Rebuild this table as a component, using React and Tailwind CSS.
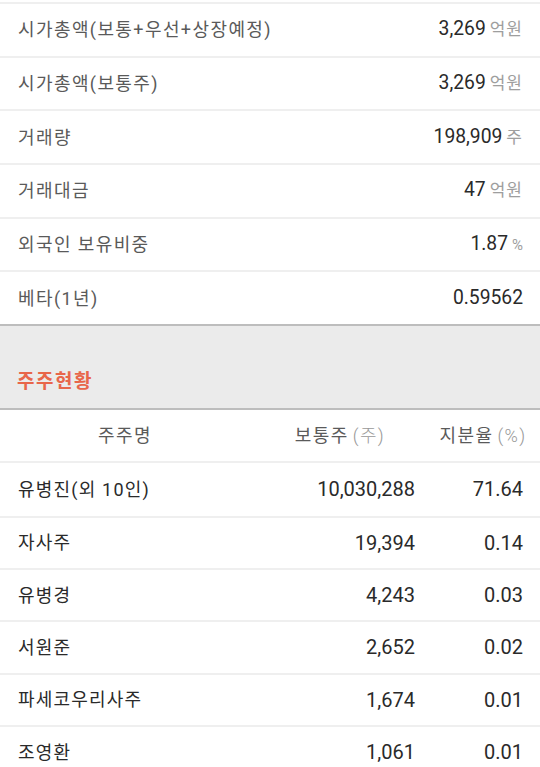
import React from "react";

const font = { fontFamily: "Roboto, 'Noto Sans CJK KR', sans-serif" };

const info = [
  ["시가총액(보통+우선+상장예정)", "3,269", "억원"],
  ["시가총액(보통주)", "3,269", "억원"],
  ["거래량", "198,909", "주"],
  ["거래대금", "47", "억원"],
  ["외국인 보유비중", "1.87", "%"],
  ["베타(1년)", "0.59562", ""],
];

const holders = [
  ["유병진(외 10인)", "10,030,288", "71.64"],
  ["자사주", "19,394", "0.14"],
  ["유병경", "4,243", "0.03"],
  ["서원준", "2,652", "0.02"],
  ["파세코우리사주", "1,674", "0.01"],
  ["조영환", "1,061", "0.01"],
];

export default function App() {
  return (
    <div className="w-[540px] h-[767px] overflow-hidden bg-white" style={font}>
      <div className="h-[2px]" />
      {info.map(([l, v, u], i) => (
        <div
          key={i}
          className="flex items-center justify-between pl-[18px] pr-[17px] h-[53.7px] border-t-2 border-[#efefef]"
        >
          <span className="text-[18px] tracking-[1.4px] text-[#5a5a5a]">{l}</span>
          <span className="flex items-baseline">
            <span className="text-[19.3px] font-normal text-[#2a2a2a]">{v}</span>
            {u && (
              <span className={`ml-[4px] ${u === "%" ? "text-[15px]" : "text-[17px] tracking-[1px]"} text-[#9e9e9e]`}>
                {u}
              </span>
            )}
          </span>
        </div>
      ))}
      <div className="h-[86px] bg-[#ebebeb] border-t-2 border-b-2 border-[#bdbdbd] flex items-end pb-[12px] px-[17px]">
        <span className="text-[19px] font-bold tracking-[1.5px] text-[#e8664a]">주주현황</span>
      </div>
      <div className="flex items-center h-[53px] border-b-2 border-[#efefef] text-[18px] text-[#5a5a5a]">
        <div className="w-[250px] text-center tracking-[1.5px]">주주명</div>
        <div className="w-[180px] text-center tracking-[1.4px]">
          보통주<span className="ml-[4px] text-[18px] font-light text-[#999999]">(주)</span>
        </div>
        <div className="w-[110px] text-center pr-[4px] tracking-[1.4px]">
          지분율<span className="ml-[4px] text-[18px] font-light text-[#999999]">(%)</span>
        </div>
      </div>
      {holders.map(([n, s, p], i) => (
        <div
          key={i}
          className={`flex items-center h-[52.4px] ${i > 0 ? "border-t-2 border-[#efefef]" : ""}`}
        >
          <div className="w-[250px] pl-[18px] text-[18px] tracking-[1.2px] text-[#2a2a2a]">{n}</div>
          <div className="w-[165px] text-right text-[20px] font-normal text-[#2a2a2a]">{s}</div>
          <div className="w-[108px] text-right text-[20px] font-normal text-[#2a2a2a]">{p}</div>
        </div>
      ))}
    </div>
  );
}
